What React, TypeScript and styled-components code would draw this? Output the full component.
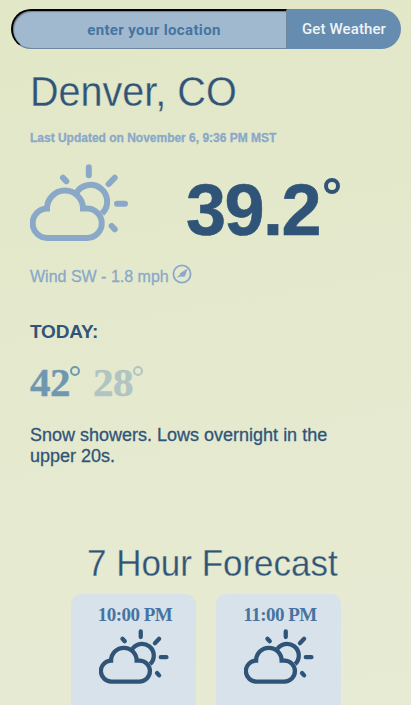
import React from "react";
import styled, { createGlobalStyle } from "styled-components";

const navy = "#305478";
const sky = "#8aa9c8";
const steel = "#4674a2";

const GlobalStyle = createGlobalStyle`
  * { box-sizing: border-box; }
  html, body { margin: 0; height: 100%; overflow: hidden; }
  body {
    font-family: "Liberation Sans", Arial, sans-serif;
    color: ${navy};
    background: linear-gradient(170deg, #e2e7c7, #e7ebd4);
  }
`;

const Page = styled.main`
  height: 705px;
  overflow: hidden;
  padding-top: 9px;
`;

const SearchForm = styled.form`
  display: flex;
  width: 390px;
  height: 40px;
  margin-left: 11px;
`;

const LocationInput = styled.input`
  width: 276px;
  height: 40px;
  padding: 0 0 0 9px;
  border: 2px solid #000;
  border-color: #000 #70879f #70879f #000;
  border-width: 2px 1px 1px 2px;
  border-radius: 20px 0 0 20px;
  background: #a0b9cf;
  box-shadow: inset 1px 1px 1px rgba(0, 0, 0, 0.3);
  text-align: center;
  font: 700 15px Roboto, sans-serif;
  letter-spacing: 0.37px;
  outline: none;
  &::placeholder { color: ${steel}; opacity: 1; }
`;

const SearchButton = styled.button`
  width: 114px;
  padding: 0;
  border: 0;
  border-radius: 0 20px 20px 0;
  background: #668caf;
  color: #f0f3f7;
  font: 500 15px Roboto, sans-serif;
  letter-spacing: 0.12px;
`;

const Current = styled.section`
  padding: 14px 30px 0;
`;

const LightHeading = styled.h1<{ $size: number; $stretch: number; $line: number }>`
  margin: 0;
  width: max-content;
  font-size: ${(p) => p.$size}px;
  line-height: ${(p) => p.$line}px;
  font-weight: 400;
  white-space: nowrap;
  -webkit-text-stroke: 0.3px #e4e8cd;
  transform: scaleX(${(p) => p.$stretch});
  transform-origin: left;
`;

const Updated = styled.p`
  margin: 11px 0 0;
  font-size: 12px;
  line-height: 16px;
  font-weight: 700;
  letter-spacing: -0.01px;
  color: ${sky};
  -webkit-text-stroke: 0.3px currentColor;
`;

const Reading = styled.div`
  display: flex;
  height: 78px;
  margin-top: 18px;
`;

const Temperature = styled.div`
  display: flex;
  margin-left: 56px;
  font-size: 72px;
  line-height: 93px;
  font-weight: 700;
  letter-spacing: -1.5px;
  -webkit-text-stroke: 0.6px currentColor;
`;

const Degree = styled.span<{ $size: number; $stroke: number; $top: number; $gap: number }>`
  width: ${(p) => p.$size}px;
  height: ${(p) => p.$size}px;
  margin: ${(p) => p.$top}px 0 0 ${(p) => p.$gap}px;
  border: ${(p) => p.$stroke}px solid currentColor;
  border-radius: 50%;
`;

const Wind = styled.div`
  display: flex;
  align-items: center;
  gap: 3px;
  height: 20px;
  margin-top: 25px;
  font-size: 16px;
  line-height: 24px;
  color: ${sky};
  -webkit-text-stroke: 0.3px currentColor;
  svg { margin-top: -6px; }
`;

const Today = styled.h2`
  margin: 33px 0 0;
  font-size: 19px;
  line-height: 24px;
  letter-spacing: -0.2px;
`;

const Range = styled.div`
  display: flex;
  height: 44px;
  margin-top: 16px;
`;

const RangeValue = styled.span<{ $color: string }>`
  display: flex;
  width: 63px;
  font: 700 41px/44px "Liberation Serif", Times, serif;
  letter-spacing: -0.5px;
  color: ${(p) => p.$color};
  -webkit-text-stroke: 0.4px currentColor;
`;

const Summary = styled.p`
  width: 320px;
  margin: 21px 0 0;
  font-size: 18px;
  line-height: 21px;
  -webkit-text-stroke: 0.3px currentColor;
`;

const Forecast = styled.section`
  display: flex;
  flex-direction: column;
  margin-top: 75px;
`;

const ForecastTitle = styled.div`
  margin-left: 87px;
`;

const Hours = styled.div`
  display: flex;
  gap: 20px;
  margin: 8px 0 0 71px;
`;

const HourCard = styled.article`
  display: flex;
  flex-direction: column;
  align-items: center;
  width: 125px;
  height: 190px;
  padding: 9px 0 0 3px;
  border-radius: 10px;
  background: #d8e2ea;

  svg { margin-left: -2px; }
`;

const HourTime = styled.h3`
  margin: 0 0 2px;
  font: 700 19px/24px "Liberation Serif", Times, serif;
  letter-spacing: -0.5px;
  color: ${steel};
`;

function PartlyCloudy({ width, color }: { width: number; color: string }) {
  return (
    <svg width={width} height={width * 0.8} viewBox="0 0 100 80" fill="none" stroke={color} strokeWidth="6">
      <path d="M17 44.5A18 18 0 0 1 53 44.5H57A14.75 14.75 0 0 1 57 74H17.75A14.75 14.75 0 0 1 17 44.5Z" />
      <path d="M46 29.5A16.6 16.6 0 1 1 72 49.5" />
      <path
        strokeLinecap="round"
        d="M58.8 3.3V11.3M87 39.7H95M78.7 20L84.7 13.7M33 13.7L36.3 17.3M81.7 62L84.7 65.3"
      />
    </svg>
  );
}

function WindDirection() {
  return (
    <svg width="20" height="20" viewBox="0 0 20 20" fill="none">
      <circle cx="10" cy="10" r="8.6" stroke={sky} strokeWidth="1.8" />
      <path d="M15.4 4.8L4.4 13.4L9.6 12.6L13 12.4Z" fill={sky} />
      <path d="M15.4 4.8L8 9.2L8 11.5L11.6 12.8Z" fill={sky} />
    </svg>
  );
}

const hours = ["10:00 PM", "11:00 PM"];

export default function App() {
  return (
    <Page>
      <GlobalStyle />
      <SearchForm onSubmit={(e) => e.preventDefault()}>
        <LocationInput placeholder="enter your location" />
        <SearchButton>Get Weather</SearchButton>
      </SearchForm>
      <Current>
        <LightHeading $size={43} $line={56} $stretch={0.92}>Denver, CO</LightHeading>
        <Updated>Last Updated on November 6, 9:36 PM MST</Updated>
        <Reading>
          <PartlyCloudy width={100} color={sky} />
          <Temperature>
            39.2
            <Degree $size={16} $stroke={4} $top={14} $gap={4} />
          </Temperature>
        </Reading>
        <Wind>
          Wind SW - 1.8 mph
          <WindDirection />
        </Wind>
        <Today>TODAY:</Today>
        <Range>
          <RangeValue $color="#7097b2">42<Degree $size={10} $stroke={2} $top={6} $gap={0} /></RangeValue>
          <RangeValue $color="#b0c4c1">28<Degree $size={10} $stroke={2} $top={6} $gap={0} /></RangeValue>
        </Range>
        <Summary>Snow showers. Lows overnight in the upper 20s.</Summary>
      </Current>
      <Forecast>
        <ForecastTitle>
          <LightHeading as="h2" $size={37} $line={44} $stretch={0.945}>7 Hour Forecast</LightHeading>
        </ForecastTitle>
        <Hours>
          {hours.map((hour) => (
            <HourCard key={hour}>
              <HourTime>{hour}</HourTime>
              <PartlyCloudy width={71} color={navy} />
            </HourCard>
          ))}
        </Hours>
      </Forecast>
    </Page>
  );
}
